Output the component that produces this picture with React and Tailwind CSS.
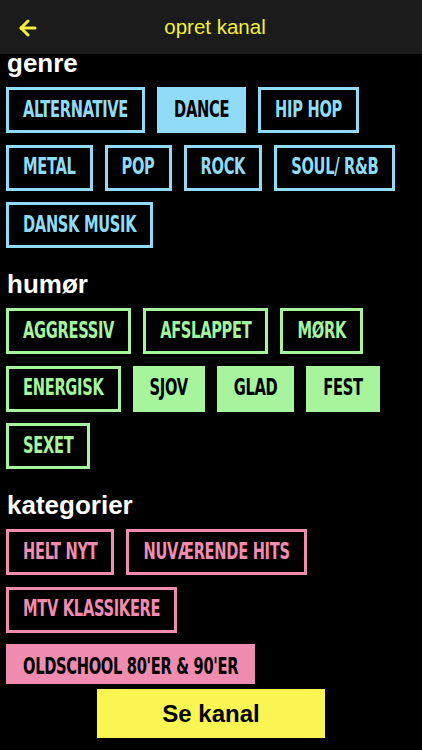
import { ArrowLeft } from 'lucide-react';

const sections = [
  {
    title: 'genre',
    color: 'blue',
    tags: [
      { label: 'ALTERNATIVE' },
      { label: 'DANCE', active: true },
      { label: 'HIP HOP' },
      { label: 'METAL' },
      { label: 'POP' },
      { label: 'ROCK' },
      { label: 'SOUL/ R&B' },
      { label: 'DANSK MUSIK' },
    ],
  },
  {
    title: 'humør',
    color: 'green',
    tags: [
      { label: 'AGGRESSIV' },
      { label: 'AFSLAPPET' },
      { label: 'MØRK' },
      { label: 'ENERGISK' },
      { label: 'SJOV', active: true },
      { label: 'GLAD', active: true },
      { label: 'FEST', active: true },
      { label: 'SEXET' },
    ],
  },
  {
    title: 'kategorier',
    color: 'pink',
    tags: [
      { label: 'HELT NYT' },
      { label: 'NUVÆRENDE HITS' },
      { label: 'MTV KLASSIKERE' },
      { label: "OLDSCHOOL 80'ER & 90'ER", active: true },
    ],
  },
];

const styles = {
  blue: {
    on: 'bg-[#90dcf8] border-[#90dcf8] text-black',
    off: 'bg-black border-[#90dcf8] text-[#90dcf8]',
  },
  green: {
    on: 'bg-[#a6f59c] border-[#a6f59c] text-black',
    off: 'bg-black border-[#a6f59c] text-[#a6f59c]',
  },
  pink: {
    on: 'bg-[#f08cb0] border-[#f08cb0] text-black',
    off: 'bg-black border-[#f08cb0] text-[#f08cb0]',
  },
};

function Tag({ label, active, color }) {
  const cls = active ? styles[color].on : styles[color].off;
  return (
    <button className={`h-[46px] px-[14px] border-[3px] flex items-center ${cls}`}>
      <span className="inline-block scale-y-[1.42] text-[16.3px] font-bold leading-none tracking-[-0.3px] whitespace-nowrap [font-family:'DejaVu_Sans_Condensed','DejaVu_Sans',sans-serif]">
        {label}
      </span>
    </button>
  );
}

export default function App() {
  return (
    <div className="w-[422px] h-[750px] bg-black flex flex-col overflow-hidden [font-family:'Liberation_Sans',Arial,sans-serif]">
      <div className="h-[54px] shrink-0 bg-[#1b1b1b] relative flex items-center justify-center z-10">
        <button className="absolute left-[16px] top-[16px] text-[#f3ef3c]">
          <ArrowLeft size={24} strokeWidth={3} />
        </button>
        <h1 className="text-[20.5px] text-[#f3ef3c] leading-none pl-[8px]">opret kanal</h1>
      </div>

      <div className="h-[630px] shrink-0 overflow-hidden">
        <div className="-mt-[5px] px-[6px]">
          {sections.map((s, i) => (
            <div key={s.title} className={i === 0 ? '' : 'mt-[22px]'}>
              <h2 className="text-[26px] font-bold text-white leading-[28px] pl-[1px] mb-[10px]">{s.title}</h2>
              <div className="flex flex-wrap gap-x-3 gap-y-[11.5px]">
                {s.tags.map(t => (
                  <Tag key={t.label} {...t} color={s.color} />
                ))}
              </div>
            </div>
          ))}
        </div>
      </div>

      <div className="flex-1 flex justify-center pt-[5px]">
        <button className="w-[228px] h-[49px] bg-[#faf552] text-black text-[24px] font-bold">
          Se kanal
        </button>
      </div>
    </div>
  );
}
